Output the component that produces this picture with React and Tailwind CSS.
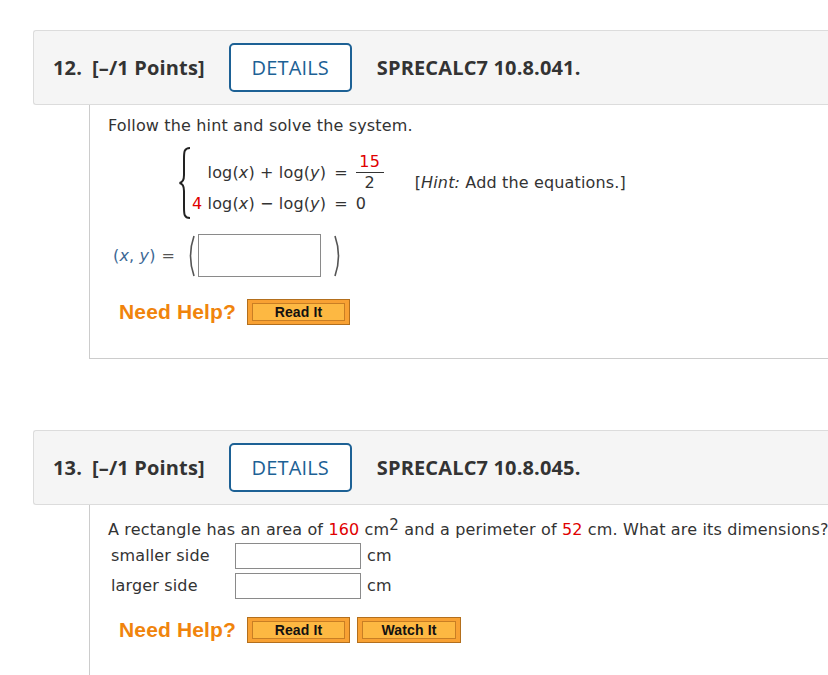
import React from 'react';

function Header({ num, code }) {
    return (
        <div className="h-[75px] flex items-center bg-[#f5f5f5] border border-r-0 border-[#dcdcdc] rounded-l-[3px] pl-[19px] font-['Open_Sans',sans-serif] text-[20px] text-[#333]">
            <span className="font-bold">{num}</span>
            <span className="font-bold ml-[10px]">[–/1 Points]</span>
            <button className="ml-[24px] w-[123px] h-[49px] border-2 border-[#1d6195] rounded-[5px] text-[#1d6195] font-medium bg-white">
                DETAILS
            </button>
            <span className="font-bold ml-[25px]">{code}</span>
        </div>
    );
}

function OrangeButton({ label, width }) {
    return (
        <div
            className="h-[26px] border border-[#b36f1d] bg-[#f8a133] px-[4px] py-[3px] flex"
            style={{ width }}
        >
            <div className="flex-1 border border-[#c97e24] bg-[#fdb842] flex items-center justify-center font-['Liberation_Sans',Arial,sans-serif] font-bold text-[14px] text-[#111] leading-none">
                {label}
            </div>
        </div>
    );
}

function NeedHelp({ children }) {
    return (
        <div className="flex items-center ml-[11px]">
            <span className="font-['Liberation_Sans',Arial,sans-serif] font-bold text-[21px] text-[#f0840c] mr-[11px]">
                Need Help?
            </span>
            <div className="flex gap-[7px]">{children}</div>
        </div>
    );
}

const Brace = () => (
    <svg width="14" height="72" viewBox="0 0 14 72" className="shrink-0">
        <path
            d="M12 1 C6 1 6 5 6 12 L6 28 C6 33 4.5 35.5 1.5 36 C4.5 36.5 6 39 6 44 L6 60 C6 67 6 71 12 71"
            fill="none"
            stroke="#222"
            strokeWidth="2"
        />
    </svg>
);

const Paren = ({ flip }) => (
    <svg width="9" height="42" viewBox="0 0 9 42" className={flip ? 'scale-x-[-1]' : ''}>
        <path d="M7 1 Q0 21 7 41" fill="none" stroke="#555" strokeWidth="1.6" />
    </svg>
);

const V = ({ children }) => <i className="italic">{children}</i>;

export default function App() {
    return (
        <div className="min-h-screen bg-white pt-[30px] pl-[33px] overflow-hidden font-['DejaVu_Sans',Verdana,sans-serif] text-[16px] tracking-[0.15px] leading-[18px] text-[#333]">
            {/* question 12 */}
            <Header num="12." code="SPRECALC7 10.8.041." />
            <div className="ml-[56px] border-l border-b border-[#cccccc] pl-[18px] pt-[12px] pb-[33px]">
                <p>Follow the hint and solve the system.</p>

                <div className="flex items-center mt-[12px] ml-[70px]">
                    <Brace />
                    <div className="grid grid-cols-[auto_auto_auto] items-center gap-x-[8px] gap-y-[3px]">
                        <span className="text-right">
                            log(<V>x</V>) + log(<V>y</V>)
                        </span>
                        <span>=</span>
                        <span className="inline-flex flex-col items-center w-[28px]">
                            <span className="text-[#e00000]">15</span>
                            <span className="w-full h-px bg-[#333] my-[1px]" />
                            <span>2</span>
                        </span>
                        <span className="text-right">
                            <span className="text-[#e00000]">4</span> log(<V>x</V>) − log(<V>y</V>)
                        </span>
                        <span>=</span>
                        <span>0</span>
                    </div>
                    <span className="ml-[31px]">
                        [<V>Hint:</V> Add the equations.]
                    </span>
                </div>

                <div className="flex items-center mt-[15px] ml-[5px]">
                    <span className="text-[#3c6894]">
                        (<V>x</V>, <V>y</V>)
                    </span>
                    <span className="ml-[6px] mr-[12px] text-[#555]">=</span>
                    <Paren />
                    <div className="w-[123px] h-[43px] border border-[#8a8a8a] bg-white ml-[2px]" />
                    <div className="ml-[12px]">
                        <Paren flip />
                    </div>
                </div>

                <div className="mt-[22px]">
                    <NeedHelp>
                        <OrangeButton label="Read It" width={103} />
                    </NeedHelp>
                </div>
            </div>

            {/* question 13 */}
            <div className="mt-[71px]">
                <Header num="13." code="SPRECALC7 10.8.045." />
            </div>
            <div className="ml-[56px] border-l border-[#cccccc] pl-[18px] pt-[16px] pb-[40px]">
                <p className="whitespace-nowrap">
                    A rectangle has an area of <span className="text-[#e00000]">160</span> cm
                    <sup className="text-[15px] leading-none top-[-5px]">2</sup> and a perimeter of{' '}
                    <span className="text-[#e00000]">52</span> cm. What are its dimensions?
                </p>

                <div className="grid grid-cols-[124px_126px_auto] items-center gap-y-[4px] mt-[4px] ml-[3px]">
                    <span>smaller side</span>
                    <div className="h-[26px] border border-[#8a8a8a] bg-white" />
                    <span className="ml-[6px]">cm</span>
                    <span>larger side</span>
                    <div className="h-[26px] border border-[#8a8a8a] bg-white" />
                    <span className="ml-[6px]">cm</span>
                </div>

                <div className="mt-[18px]">
                    <NeedHelp>
                        <OrangeButton label="Read It" width={103} />
                        <OrangeButton label="Watch It" width={104} />
                    </NeedHelp>
                </div>
            </div>
        </div>
    );
}
